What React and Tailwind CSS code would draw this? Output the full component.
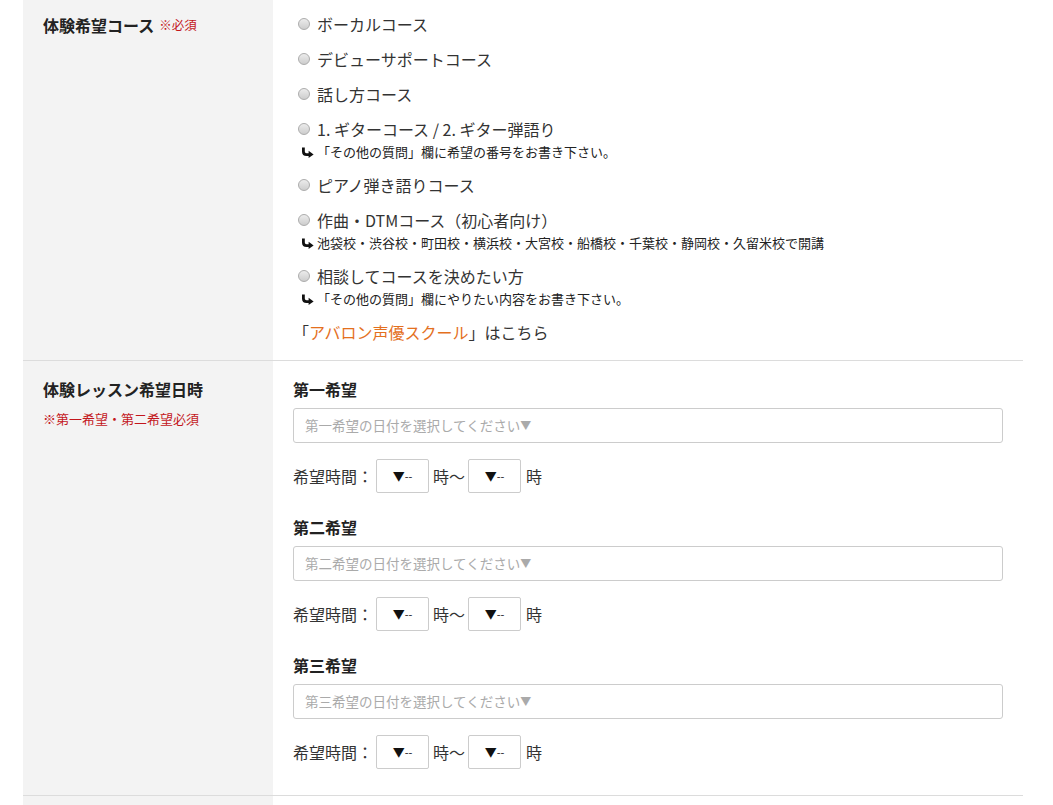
import React from "react";

const FONT = { fontFamily: '"Noto Sans CJK JP", "Noto Sans", sans-serif' };

const Radio = () => (
  <span className="inline-block w-[12px] h-[12px] rounded-full border border-[#acacac] bg-gradient-to-b from-[#ececec] to-[#cdcdcd] shrink-0" />
);

const Hook = () => (
  <svg width="13" height="11" viewBox="0 0 13 11" className="shrink-0">
    <path d="M2.4 0.5 V4.5 Q2.4 7.6 5.6 7.6 H8.5" stroke="#111" strokeWidth="2.8" fill="none" />
    <path d="M7.6 3.8 L12.6 7.6 L7.6 11 Z" fill="#111" />
  </svg>
);

const Option = ({ label, note }) => (
  <div>
    <div className="h-[35px] flex items-center pl-[5px] gap-[7px] text-[16px] text-[#333]">
      <Radio />
      <span>{label}</span>
    </div>
    {note && (
      <div className="h-[20px] -mt-[4px] mb-[5px] flex items-center pl-[8px] gap-[3px] text-[13px] text-[#222]">
        <Hook />
        <span>{note}</span>
      </div>
    )}
  </div>
);

const TimeBox = () => (
  <div className="w-[53px] h-[34px] border border-[#ccc] rounded-[2px] flex items-center justify-center text-[#111]">
    <span className="text-[12px]">▼</span>
    <span className="text-[11px]">--</span>
  </div>
);

const Wish = ({ title, first }) => (
  <div className={first ? "" : "mt-[24px]"}>
    <div className="h-[20px] flex items-center text-[16px] font-bold text-[#222]">{title}</div>
    <div className="mt-[9px] h-[35px] w-[710px] border border-[#ccc] rounded-[3px] flex items-center px-[11px] text-[13.5px] text-[#aaa]">
      {title}の日付を選択してください<span className="text-[11px]">▼</span>
    </div>
    <div className="mt-[16px] h-[34px] flex items-center text-[16px] text-[#333]">
      <span className="w-[83px]">希望時間：</span>
      <TimeBox />
      <span className="ml-[4px] w-[35px]">時～</span>
      <TimeBox />
      <span className="ml-[5px]">時</span>
    </div>
  </div>
);

export default function App() {
  return (
    <div className="min-h-screen bg-white pl-[23px] pr-[30px]" style={FONT}>
      <div className="flex border-b border-[#dcdcdc]">
        <div className="w-[250px] bg-[#f3f3f3] pl-[20px] pt-[15px]">
          <div className="flex items-center h-[20px]">
            <span className="text-[16px] font-bold text-[#222]">体験希望コース</span>
            <span className="ml-[5px] text-[12.5px] text-[#c3161c]">※必須</span>
          </div>
        </div>
        <div className="flex-1 pl-[20px] pt-[6px] pb-[11px]">
          <Option label="ボーカルコース" />
          <Option label="デビューサポートコース" />
          <Option label="話し方コース" />
          <Option label="1. ギターコース / 2. ギター弾語り" note="「その他の質問」欄に希望の番号をお書き下さい。" />
          <Option label="ピアノ弾き語りコース" />
          <Option label="作曲・DTMコース（初心者向け）" note="池袋校・渋谷校・町田校・横浜校・大宮校・船橋校・千葉校・静岡校・久留米校で開講" />
          <Option label="相談してコースを決めたい方" note="「その他の質問」欄にやりたい内容をお書き下さい。" />
          <div className="h-[35px] flex items-center text-[16px] text-[#333]">
            「<span className="text-[#e4701e]">アバロン声優スクール</span>」はこちら
          </div>
        </div>
      </div>
      <div className="flex border-b border-[#dcdcdc]">
        <div className="w-[250px] bg-[#f3f3f3] pl-[20px] pt-[18px]">
          <div className="h-[20px] flex items-center text-[16px] font-bold text-[#222]">体験レッスン希望日時</div>
          <div className="mt-[10px] text-[13px] text-[#c3161c]">※第一希望・第二希望必須</div>
        </div>
        <div className="flex-1 pl-[20px] pt-[18px] pb-[26px]">
          <Wish title="第一希望" first />
          <Wish title="第二希望" />
          <Wish title="第三希望" />
        </div>
      </div>
      <div className="flex">
        <div className="w-[250px] h-[40px] bg-[#f3f3f3]" />
      </div>
    </div>
  );
}
